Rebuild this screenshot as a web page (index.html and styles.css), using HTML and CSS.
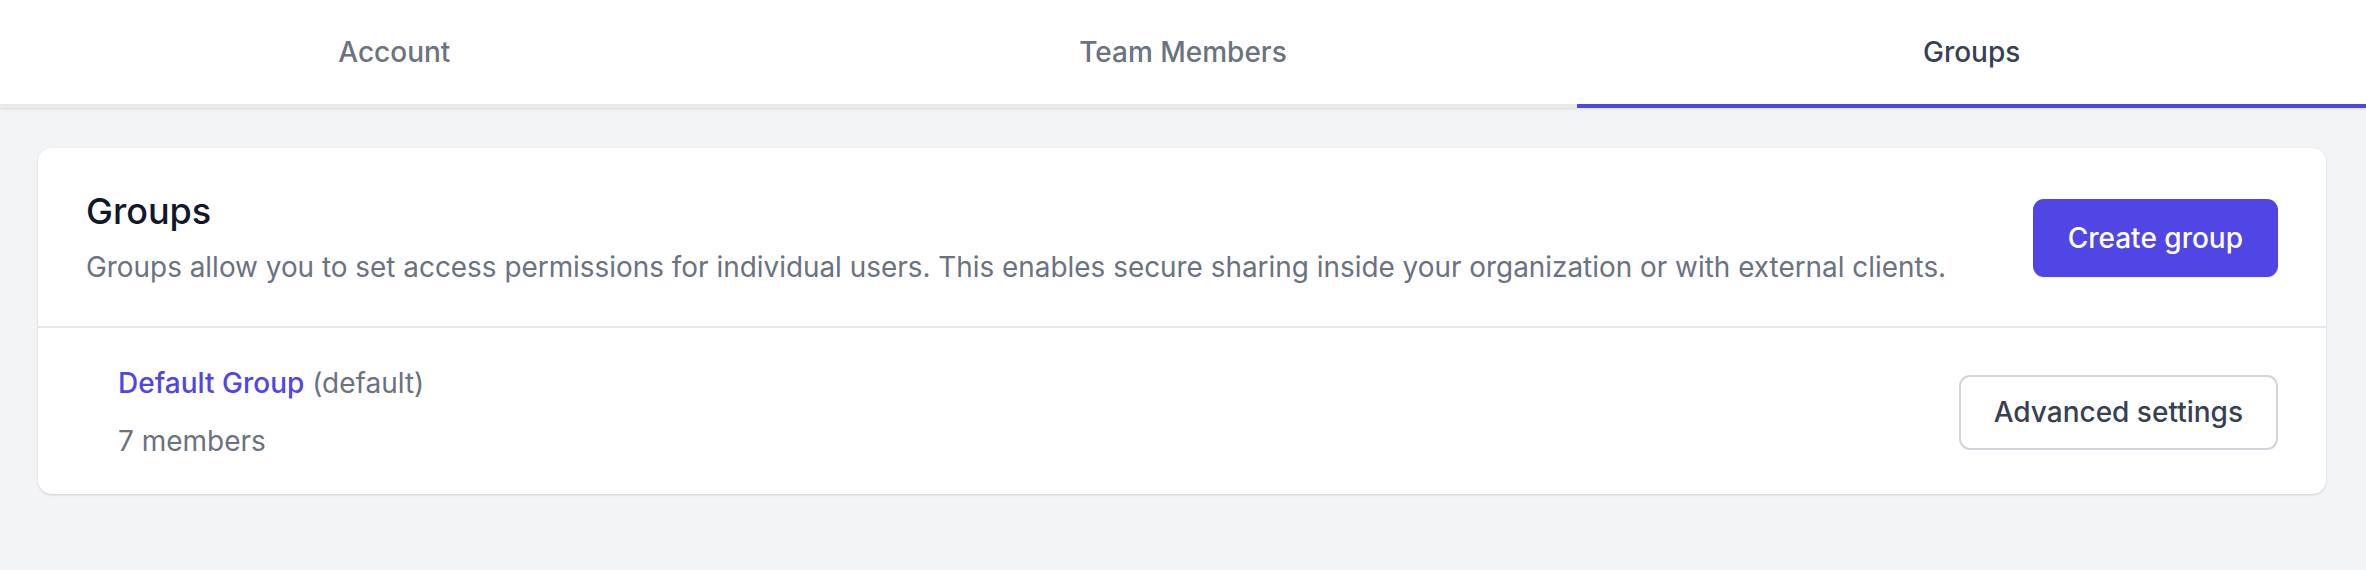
FILE: index.html
```html
<!DOCTYPE html>
<html lang="en">
<head>
<meta charset="utf-8">
<title>Groups</title>
<link rel="stylesheet" href="styles.css">
</head>
<body>
<nav class="tabs">
  <a class="tab">Account</a>
  <a class="tab">Team Members</a>
  <a class="tab tab-active">Groups</a>
</nav>
<main class="main">
  <section class="card">
    <header class="card-header">
      <div class="card-intro">
        <h1 class="card-title">Groups</h1>
        <p class="card-desc">Groups allow you to set access permissions for individual users. This enables secure sharing inside your organization or with external clients.</p>
      </div>
      <button class="btn btn-primary">Create group</button>
    </header>
    <div class="group-row">
      <div class="group-info">
        <div class="group-name"><span class="group-link">Default Group</span> <span class="group-tag">(default)</span></div>
        <div class="group-count">7 members</div>
      </div>
      <button class="btn btn-outline">Advanced settings</button>
    </div>
  </section>
</main>
</body>
</html>
```

FILE: styles.css
```css
* { box-sizing: border-box; }

body {
  margin: 0;
  background: #f3f4f6;
  font-family: Inter, "Noto Sans", "Liberation Sans", sans-serif;
  color: #111827;
}

.tabs {
  display: grid;
  grid-template-columns: repeat(3, 1fr);
  background: #ffffff;
  box-shadow: 0 1px 3px rgba(0, 0, 0, 0.08), 0 1px 2px rgba(0, 0, 0, 0.04);
  position: relative;
  z-index: 1;
}

.tab {
  height: 108px;
  display: flex;
  align-items: center;
  justify-content: center;
  font-size: 28px;
  line-height: 40px;
  font-weight: 500;
  color: #6b7280;
  background: #ffffff;
  border-bottom: 4px solid #e9eaed;
}

.tab-active {
  color: #374151;
  border-bottom-color: #4f46e5;
}

.main {
  padding: 40px 40px 40px 38px;
}

.card {
  background: #ffffff;
  border-radius: 14px;
  box-shadow: 0 1px 3px rgba(0, 0, 0, 0.1), 0 1px 2px rgba(0, 0, 0, 0.06);
  overflow: hidden;
}

.card-header {
  display: flex;
  align-items: center;
  justify-content: space-between;
  gap: 40px;
  padding: 41px 48px 39px 48px;
  border-bottom: 2px solid #e5e7eb;
}

.card-title {
  margin: 0;
  font-size: 36px;
  line-height: 44px;
  font-weight: 500;
  color: #111827;
}

.card-desc {
  margin: 14px 0 0 0;
  font-size: 27.9px;
  line-height: 40px;
  color: #6b7280;
}

.btn {
  font-family: inherit;
  font-size: 28px;
  line-height: 40px;
  font-weight: 500;
  border-radius: 11px;
  cursor: pointer;
  white-space: nowrap;
}

.btn-primary {
  background: #4f46e5;
  color: #ffffff;
  border: 0;
  padding: 19px 35px;
  box-shadow: 0 1px 2px rgba(0, 0, 0, 0.05);
}

.btn-outline {
  background: #ffffff;
  color: #374151;
  border: 2px solid #d1d5db;
  padding: 15.5px 33px;
}

.group-row {
  display: flex;
  align-items: center;
  justify-content: space-between;
  padding: 35px 48px 33px 80px;
}

.group-name {
  font-size: 28px;
  line-height: 40px;
  color: #6b7280;
}

.group-link {
  color: #4f46e5;
  font-weight: 500;
}

.group-count {
  margin-top: 18px;
  font-size: 28px;
  line-height: 40px;
  color: #6b7280;
}
```
